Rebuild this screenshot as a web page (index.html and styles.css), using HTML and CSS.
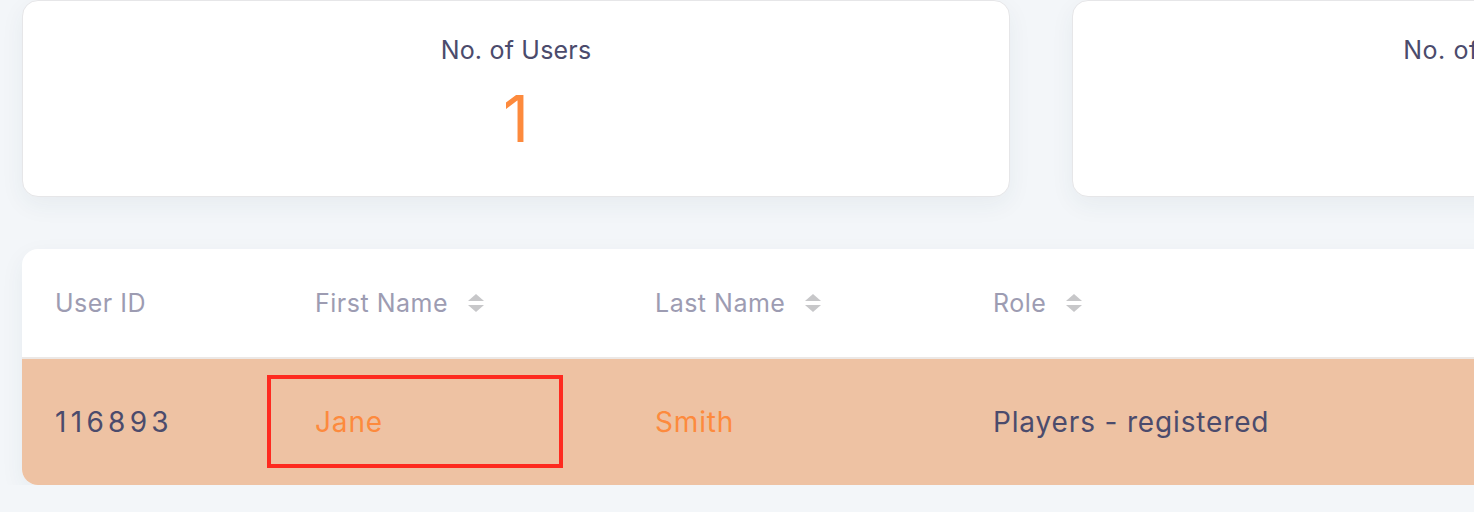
FILE: index.html
```html
<!DOCTYPE html>
<html>
<head>
<meta charset="utf-8">
<link rel="stylesheet" href="styles.css">
</head>
<body>
<div class="page">
  <div class="stats">
    <div class="stat-card">
      <div class="stat-title">No. of Users</div>
      <div class="stat-value">1</div>
    </div>
    <div class="stat-card">
      <div class="stat-title wide">No. of Players - registered</div>
      <div class="stat-value">1</div>
    </div>
  </div>

  <div class="table-card">
    <div class="row head">
      <div class="cell c1">User ID</div>
      <div class="cell c2">First Name <span class="sort"><svg width="16" height="18" viewBox="0 0 16 18"><path d="M8 0L16 7H0Z" fill="#c7c7c9"/><path d="M0 11H16L8 18Z" fill="#c7c7c9"/></svg></span></div>
      <div class="cell c3">Last Name <span class="sort"><svg width="16" height="18" viewBox="0 0 16 18"><path d="M8 0L16 7H0Z" fill="#c7c7c9"/><path d="M0 11H16L8 18Z" fill="#c7c7c9"/></svg></span></div>
      <div class="cell c4">Role <span class="sort"><svg width="16" height="18" viewBox="0 0 16 18"><path d="M8 0L16 7H0Z" fill="#c7c7c9"/><path d="M0 11H16L8 18Z" fill="#c7c7c9"/></svg></span></div>
    </div>
    <div class="row body">
      <div class="cell c1 id">116893</div>
      <div class="cell c2 link">Jane</div>
      <div class="cell c3 link">Smith</div>
      <div class="cell c4">Players - registered</div>
      <div class="highlight"></div>
    </div>
  </div>
</div>
</body>
</html>
```

FILE: styles.css
```css
html, body {
  margin: 0;
  padding: 0;
  background: #f3f6f9;
  font-family: Inter, "Noto Sans", sans-serif;
  overflow: hidden;
}
.page {
  width: 2200px;
  padding: 0 0 0 22px;
}
.stats {
  display: flex;
  gap: 62px;
}
.stat-card {
  width: 988px;
  height: 197px;
  box-sizing: border-box;
  background: #fff;
  border: 1px solid #e6e6e8;
  border-radius: 16px;
  box-shadow: 0 8px 24px rgba(40, 60, 90, 0.06);
  display: flex;
  flex-direction: column;
  align-items: center;
  padding-top: 34px;
}
.stat-title {
  font-size: 25px;
  letter-spacing: 0.2px;
  color: #4b4b6c;
  line-height: 30px;
}
.stat-title.wide {
  letter-spacing: 0.55px;
}
.stat-value {
  font-size: 64px;
  color: #fd8a3d;
  line-height: 72px;
  margin-top: 18px;
}
.table-card {
  margin-top: 52px;
  width: 2100px;
  background: #fff;
  border-radius: 16px;
  box-shadow: 0 8px 24px rgba(40, 60, 90, 0.06);
  overflow: hidden;
}
.row {
  display: flex;
  align-items: center;
  position: relative;
}
.row.head {
  height: 108px;
  color: #9d9cb2;
  font-size: 25px;
  letter-spacing: 0.5px;
  border-bottom: 2px solid #ece8e6;
}
.row.body {
  height: 126px;
  background: #eec2a3;
  color: #4b4b6c;
  font-size: 28px;
  letter-spacing: 0.85px;
}
.cell {
  box-sizing: border-box;
  padding-left: 33px;
  display: flex;
  align-items: center;
}
.c1 { width: 260px; }
.c2 { width: 340px; }
.c3 { width: 338px; }
.c4 { flex: 1; }
.id { letter-spacing: 4.3px; }
.link { color: #fd8a3d; }
.sort {
  display: inline-flex;
  margin-left: 20px;
}
.highlight {
  position: absolute;
  left: 245px;
  top: 16px;
  width: 296px;
  height: 93px;
  box-sizing: border-box;
  border: 4px solid #fe2a1f;
}
```
